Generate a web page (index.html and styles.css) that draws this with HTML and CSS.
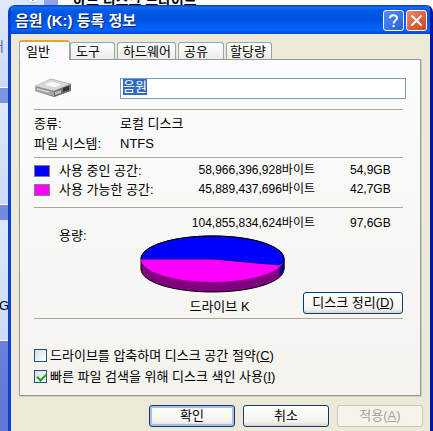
FILE: index.html
```html
<!DOCTYPE html>
<html lang="ko">
<head>
    <meta charset="UTF-8">
    <meta name="viewport" content="width=device-width, initial-scale=1.0">
    <title>음원 (K:) 등록 정보</title>
    <link rel="stylesheet" href="styles.css">
</head>
<body>
    <div class="explorer">
        <div class="side">
            <div class="side-box box-tasks">서</div>
            <div class="side-box box-places"></div>
            <div class="side-box box-details">G</div>
            <svg class="chevron" width="16" height="16" viewBox="0 0 16 16"><circle cx="8" cy="8" r="7" fill="#fff" stroke="#b8c4e4"/><path d="M5 9l3 3 3-3" fill="none" stroke="#3a5cb0" stroke-width="1.500"/></svg>
        </div>
        <div class="group-title">하드 디스크 드라이브</div>
    </div>

    <div class="dialog">
        <div class="title-bar">
            <h1>음원 (K:) 등록 정보</h1>
            <button type="button" class="title-btn help" aria-label="도움말">
                <svg width="19" height="19" viewBox="0 0 19 19"><path d="M6 7.2C6 3.2 13 3.2 13 7c0 2.4-3.4 2.6-3.4 5.4M9.6 14v2" fill="none" stroke="#fff" stroke-width="2"/></svg>
            </button>
            <button type="button" class="title-btn close" aria-label="닫기">
                <svg width="19" height="19" viewBox="0 0 19 19"><path d="M5 5l9 9M14 5l-9 9" fill="none" stroke="#fff" stroke-width="2" stroke-linecap="round"/></svg>
            </button>
        </div>

        <div class="content">
            <div class="tabs" role="tablist">
                <button type="button" class="tab active" role="tab">일반</button>
                <button type="button" class="tab tab-tools" role="tab">도구</button>
                <button type="button" class="tab tab-hardware" role="tab">하드웨어</button>
                <button type="button" class="tab tab-share" role="tab">공유</button>
                <button type="button" class="tab tab-quota" role="tab">할당량</button>
            </div>

            <div class="panel">
                <div class="name-row">
                    <svg class="drive" width="38" height="20" viewBox="0 0 38 20">
                        <path d="M1 9L17 1l20 5v7L20 19 1 13z" fill="#777"/>
                        <path d="M1 8L17 1l19 5-16 7z" fill="#dcdcdc" stroke="#aaa" stroke-width=".6"/>
                        <path d="M9 7l8-4 12 3-8 4z" fill="#f6f6f6" stroke="#c4c4c4" stroke-width=".6"/>
                        <path d="M1 9l19 5v4L1 13z" fill="#a8a8a8"/>
                        <path d="M3 11l12 3" stroke="#e6e6e6"/>
                        <path d="M20 13l16-6v6l-16 6z" fill="#707070"/>
                        <path d="M21 14l6-2v3l-6 2z" fill="#bbb"/>
                        <path d="M29 10l6-2v4l-6 2z" fill="#333"/>
                    </svg>
                    <div class="name-box">
                        <input type="text" id="volume" value="음원" aria-label="볼륨 이름">
                    </div>
                </div>

                <dl class="info">
                    <dt>종류:</dt><dd>로컬 디스크</dd>
                    <dt>파일 시스템:</dt><dd>NTFS</dd>
                </dl>

                <table class="usage">
                    <tr>
                        <td class="key"><span class="swatch used"></span></td>
                        <th scope="row">사용 중인 공간:</th>
                        <td class="bytes">58,966,396,928바이트</td>
                        <td class="size">54,9GB</td>
                    </tr>
                    <tr>
                        <td class="key"><span class="swatch free"></span></td>
                        <th scope="row">사용 가능한 공간:</th>
                        <td class="bytes">45,889,437,696바이트</td>
                        <td class="size">42,7GB</td>
                    </tr>
                </table>

                <div class="capacity">
                    <div class="total">
                        <span class="total-label">용량:</span>
                        <span class="bytes">104,855,834,624바이트</span>
                        <span class="size">97,6GB</span>
                    </div>
                    <div class="chart-row">
                        <div class="chart">
                            <svg width="145" height="58" viewBox="0 0 145 58">
                                <path d="M1 24v10c0 13 32 23 71.500 23S144 47 144 34V24z" fill="#800080" stroke="#000"/>
                                <path d="M139.500 30L144 24v10q0 3-4.500 6.500z" fill="#000080"/>
                                <ellipse cx="72.500" cy="24" rx="71.500" ry="23" fill="#f0f"/>
                                <path d="M1 24C1 11 33 1 72.500 1S144 11 144 24q0 3-4.500 6L73 24z" fill="#00f" stroke="#000080"/>
                                <path d="M1 24C1 11 33 1 72.500 1S144 11 144 24v10" fill="none" stroke="#000"/>
                            </svg>
                            <div class="drive-label">드라이브 K</div>
                        </div>
                        <button type="button" class="btn cleanup">디스크 정리(<u>D</u>)</button>
                    </div>
                </div>

                <div class="options">
                    <label><input type="checkbox"><span>드라이브를 압축하며 디스크 공간 절약(<u>C</u>)</span></label>
                    <label><input type="checkbox" checked><span>빠른 파일 검색을 위해 디스크 색인 사용(<u>I</u>)</span></label>
                </div>
            </div>

            <div class="buttons">
                <button type="button" class="btn default">확인</button>
                <button type="button" class="btn">취소</button>
                <button type="button" class="btn" disabled>적용(<u>A</u>)</button>
            </div>
        </div>
    </div>

    <script>
        // volume name is selected when the sheet opens
        const volume = document.getElementById('volume');
        volume.focus();
        volume.select();
    </script>
</body>
</html>
```

FILE: styles.css
```css
* {
    box-sizing: border-box;
}

body {
    margin: 0;
    height: 100vh;
    overflow: hidden;
    display: flex;
    background-color: #fff;
    color: #000;
    font-family: "Liberation Sans", "Noto Sans CJK KR", sans-serif;
    font-size: 13px;
    line-height: 20px;
}

button,
input {
    margin: 0;
    font: inherit;
    color: inherit;
}

/* window behind the dialog */
.explorer {
    position: absolute;
    top: 0;
    left: 0;
    width: 100%;
    height: 100%;
    overflow: hidden;
}

.side {
    width: 58px;
    height: 100%;
    padding-right: 14px;
    background: linear-gradient(#8ea6e6, #7b96e2 20%, #6377d6);
}

.side-box {
    border-bottom: 1px solid #fff;
    background: linear-gradient(#dfe8fb, #cdd9f6);
    overflow: hidden;
}

.box-tasks {
    height: 88px;
    padding-top: 37px;
    color: #4a68b0;
    text-indent: -8px;
}

.box-places {
    height: 102px;
    margin-top: 15px;
}

.box-details {
    height: 121px;
    margin-top: 15px;
    padding-top: 76px;
    text-indent: -1px;
}

.chevron {
    position: absolute;
    top: -12px;
    left: 25px;
}

.group-title {
    position: absolute;
    top: -10px;
    left: 73px;
    font-size: 14px;
    font-weight: bold;
}

/* dialog */
.dialog {
    position: relative;
    flex: 1;
    margin: 5px 0 0 8px;
    border: solid #0a3fd0;
    border-width: 0 3px;
    border-right-color: #0019a5;
    border-radius: 7px 7px 0 0;
    background-color: #ece9d8;
    overflow: hidden;
}

.title-bar {
    display: flex;
    align-items: center;
    gap: 2px;
    height: 29px;
    padding: 2px 3px 0 4px;
    background: linear-gradient(#0040c8 0, #1868f0 8%, #0058e8 20%, #0052e0 50%, #0064ff 85%, #0048d0 100%);
}

.title-bar h1 {
    flex: 1;
    margin: 0;
    color: #fff;
    font-size: 15px;
    font-weight: bold;
    text-shadow: 1px 1px #0a246a;
}

.title-btn {
    width: 21px;
    height: 21px;
    padding: 0;
    border: 1px solid #fff;
    border-radius: 3px;
    line-height: 0;
}

.help {
    background: linear-gradient(135deg, #5c8cf0, #2460e0);
}

.close {
    background: linear-gradient(135deg, #ec8a6c, #d0401c);
}

.content {
    padding: 6px 9px 0 8px;
}

.tabs {
    display: flex;
    align-items: flex-end;
    gap: 2px;
    height: 19px;
}

.tab {
    height: 17px;
    padding: 0 0 0 5px;
    border: 1px solid #91a7b4;
    border-bottom: 0;
    border-radius: 3px 3px 0 0;
    background: linear-gradient(#fff, #ecebe5);
    line-height: 17px;
    text-align: left;
    white-space: nowrap;
}

.tab.active {
    position: relative;
    width: 51px;
    height: 20px;
    margin: 0 -2px -1px 0;
    padding-left: 6px;
    border-top: 2px solid #f0a030;
    background: #fcfcfe;
}

.tab-tools {
    width: 45px;
}

.tab-hardware {
    width: 59px;
}

.tab-share {
    width: 46px;
}

.tab-quota {
    width: 46px;
    padding-left: 3px;
}

.panel {
    padding: 18px 17px 8px 14px;
    border: 1px solid #919b9c;
    box-shadow: 1px 1px #d0cebf;
    background: linear-gradient(#fcfcfe, #f4f3ee);
}

.name-row {
    display: flex;
    gap: 48px;
    margin-right: -3px;
    padding-bottom: 10px;
}

.name-box {
    flex: 1;
    height: 21px;
    padding: 0 2px;
    border: 1px solid #7f9db9;
    background-color: #fff;
}

.name-box input {
    width: 100%;
    height: 16px;
    padding: 0;
    border: 0;
    outline: 0;
    background: none;
    display: block;
}

.name-box input::selection {
    background-color: #316ac5;
    color: #fff;
}

.info {
    display: grid;
    grid-template-columns: 86px 1fr;
    margin: 0;
    padding: 4px 0 3px;
    border-top: 1px solid #aca899;
}

.info dd {
    margin: 0;
}

.usage {
    width: 100%;
    border-collapse: separate;
    border-spacing: 0;
    border-top: 1px solid #aca899;
    padding: 3px 0 8px;
}

.usage td,
.usage th {
    height: 19px;
    padding: 0;
    line-height: 19px;
    font-weight: normal;
    text-align: left;
}

.usage .key {
    width: 25px;
}

.swatch {
    display: block;
    width: 16px;
    height: 12px;
    border: 1px solid #808080;
}

.used {
    background-color: #00f;
}

.free {
    background-color: #f0f;
}

.usage .bytes,
.total .bytes {
    font-size: 12px;
    text-align: right;
}

.usage .size,
.total .size {
    width: 88px;
    padding-left: 35px;
    font-size: 12px;
}

.capacity {
    padding-bottom: 1px;
    border-top: 1px solid #aca899;
    border-bottom: 1px solid #aca899;
}

.total {
    display: flex;
    height: 27px;
    padding-top: 5px;
}

.total-label {
    flex: 1;
    padding: 13px 0 0 25px;
}

.chart-row {
    display: flex;
    justify-content: space-between;
    align-items: flex-end;
}

.chart {
    margin-left: 106px;
    text-align: center;
}

.chart svg {
    display: block;
    margin-bottom: 4px;
}

.drive-label {
    padding-left: 14px;
}

.options {
    padding-top: 26px;
}

.options label {
    display: flex;
    align-items: center;
    gap: 3px;
    height: 21px;
}

.options input {
    appearance: none;
    width: 13px;
    height: 13px;
    border: 1px solid #1c5180;
    background: linear-gradient(135deg, #dcdcd7, #fff);
}

.options input:checked::before {
    content: "";
    display: block;
    width: 8px;
    height: 4px;
    margin: 2px 0 0 2px;
    border: solid #21a121;
    border-width: 0 0 2px 2px;
    transform: rotate(-45deg);
}

.btn {
    width: 86px;
    height: 22px;
    padding: 0;
    border: 1px solid #003c74;
    border-radius: 3px;
    background: linear-gradient(#fff, #f3f3ef 80%, #d8d4c8);
    line-height: 20px;
}

.btn.cleanup {
    width: 100px;
    margin-bottom: 3px;
}

.btn.default {
    box-shadow: inset 0 0 0 2px #a5c0ee;
}

.btn:disabled {
    border-color: #c9c7ba;
    background: #f5f4ea;
    color: #a1a192;
}

.buttons {
    display: flex;
    justify-content: flex-end;
    gap: 8px;
    margin-right: -2px;
    padding-top: 9px;
}
```
